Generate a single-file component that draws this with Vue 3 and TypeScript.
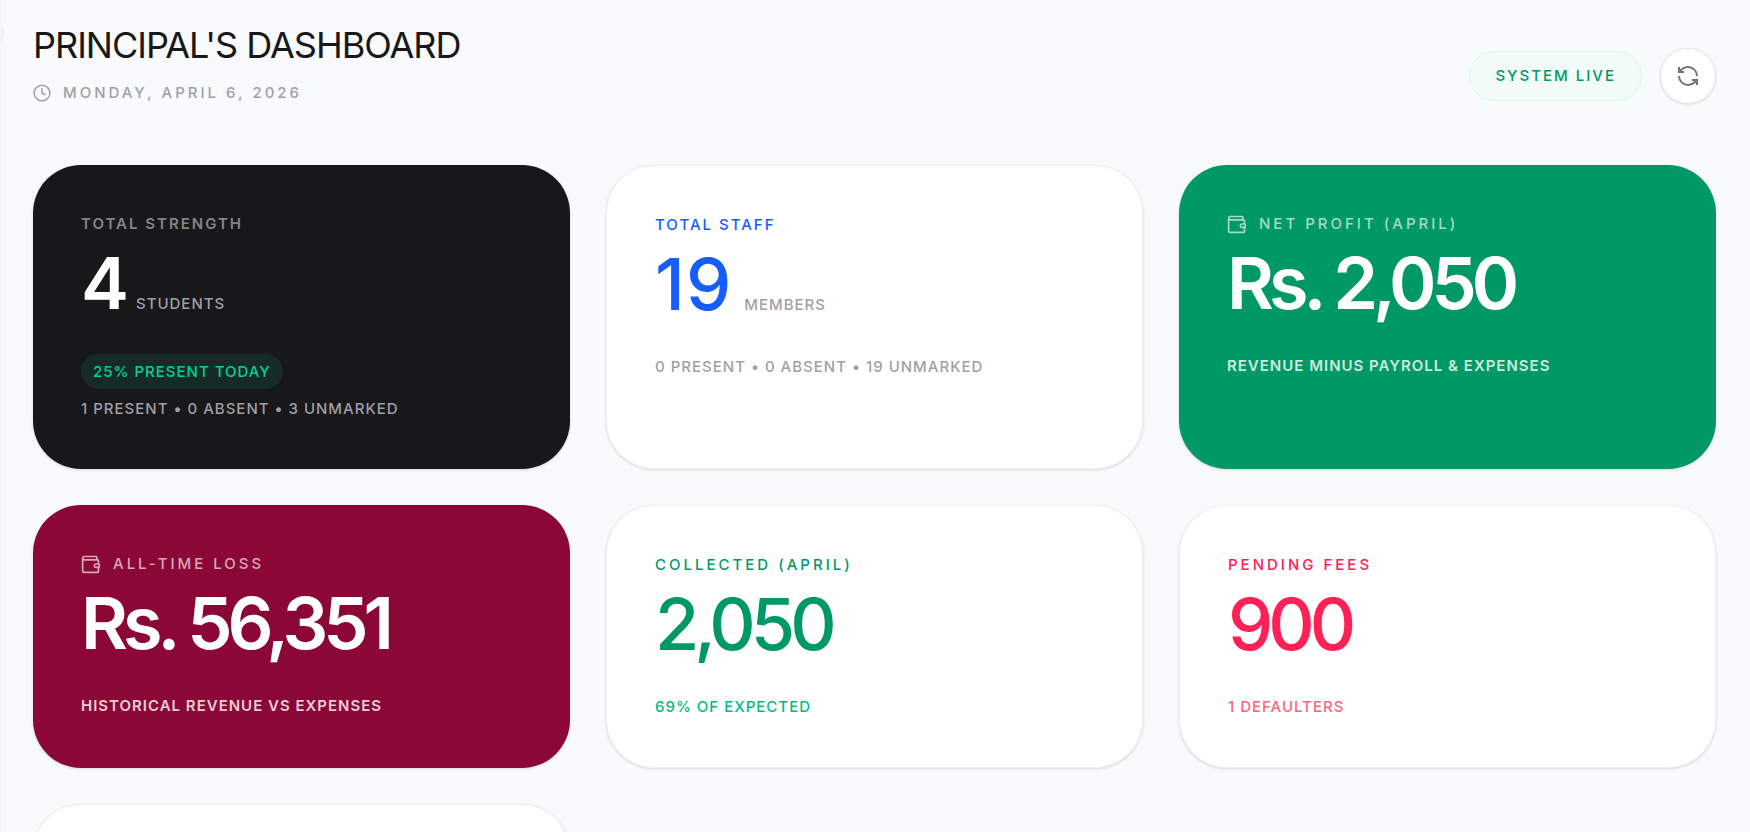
<script setup lang="ts">
interface StatCard {
  tone: string
  label: string
  value: string
  unit?: string
  badge?: string
  note: string
  wallet?: boolean
}

const cards: StatCard[] = [
  { tone: 'dark', label: 'Total Strength', value: '4', unit: 'Students', badge: '25% Present Today', note: '1 Present • 0 Absent • 3 Unmarked' },
  { tone: 'blue', label: 'Total Staff', value: '19', unit: 'Members', note: '0 Present • 0 Absent • 19 Unmarked' },
  { tone: 'green', label: 'Net Profit (April)', value: 'Rs. 2,050', note: 'Revenue minus payroll & expenses', wallet: true },
  { tone: 'wine', label: 'All-Time Loss', value: 'Rs. 56,351', note: 'Historical revenue vs expenses', wallet: true },
  { tone: 'mint', label: 'Collected (April)', value: '2,050', note: '69% of expected' },
  { tone: 'rose', label: 'Pending Fees', value: '900', note: '1 Defaulters' },
]
</script>

<template>
  <div class="page">
    <button class="rail-toggle" type="button" aria-label="Toggle sidebar"></button>
    <main class="content">
      <header class="header">
        <div>
          <h1 class="title">Principal's Dashboard</h1>
          <p class="date">
            <svg class="icon" viewBox="0 0 24 24" aria-hidden="true">
              <circle cx="12" cy="12" r="10.5" />
              <path d="M12 6v6l4 2" />
            </svg>
            <span>Monday, April 6, 2026</span>
          </p>
        </div>
        <div class="actions">
          <span class="live">System Live</span>
          <button class="refresh" type="button" aria-label="Refresh">
            <svg class="refresh-icon" viewBox="0 0 24 24" aria-hidden="true">
              <path d="M21 12a9 9 0 0 0-9-9 9.75 9.75 0 0 0-6.74 2.74L3 8" />
              <path d="M3 3v5h5" />
              <path d="M3 12a9 9 0 0 0 9 9 9.75 9.75 0 0 0 6.74-2.74L21 16" />
              <path d="M16 16h5v5" />
            </svg>
          </button>
        </div>
      </header>

      <section class="grid">
        <article v-for="card in cards" :key="card.label" class="card" :class="card.tone">
          <h2 class="label">
            <svg v-if="card.wallet" class="icon wallet" viewBox="0 0 24 24" aria-hidden="true">
              <path d="M19 7V4a1 1 0 0 0-1-1H4a2 2 0 0 0 0 4h16a1 1 0 0 1 1 1v4h-3a2 2 0 0 0 0 4h3a1 1 0 0 0 1-1v-2a1 1 0 0 0-1-1" />
              <path d="M2 5v15a2 2 0 0 0 2 2h16a1 1 0 0 0 1-1v-5" />
            </svg>
            <span>{{ card.label }}</span>
          </h2>
          <p class="figure">
            <span class="value">{{ card.value }}</span>
            <span v-if="card.unit" class="unit">{{ card.unit }}</span>
          </p>
          <div class="notes">
            <span v-if="card.badge" class="badge">{{ card.badge }}</span>
            <p class="note">{{ card.note }}</p>
          </div>
        </article>
        <article class="card blank"></article>
      </section>
    </main>
  </div>
</template>

<style>
body {
  margin: 0;
  background: #f9fafc;
}
</style>

<style scoped>
.page {
  position: relative;
  box-sizing: border-box;
  height: 100vh;
  overflow: hidden;
  border-left: 1px solid #f4f5f7;
  background: #f9fafc;
  color: #18181b;
  font-family: Inter, "Liberation Sans", sans-serif;
  text-transform: uppercase;
}
.rail-toggle {
  position: absolute;
  top: 20px;
  left: -25px;
  width: 27px;
  height: 27px;
  padding: 0;
  border: 1px solid #e2e8f0;
  border-radius: 50%;
  background: #fff;
  box-shadow: 0 1px 3px rgba(0, 0, 0, 0.1);
}
.content {
  padding: 23px 34px 36px 32px;
}
.header {
  display: flex;
  align-items: flex-end;
  justify-content: space-between;
  margin-bottom: 61px;
}
.title {
  margin: 0 0 15px;
  font-size: 36px;
  font-weight: 400;
  line-height: 44px;
  letter-spacing: -1px;
}
.date {
  display: flex;
  align-items: center;
  gap: 12px;
  margin: 0;
  color: #9f9fa9;
  font-size: 15px;
  font-weight: 500;
  line-height: 22px;
  letter-spacing: 3px;
}
.icon {
  flex: none;
  width: 18px;
  height: 18px;
  fill: none;
  stroke: currentColor;
  stroke-width: 2;
  stroke-linecap: round;
  stroke-linejoin: round;
}
.wallet {
  width: 20px;
  height: 20px;
}
.actions {
  display: flex;
  align-items: center;
  gap: 18px;
}
.live {
  padding: 13px 25px;
  border: 1px solid #d0fae5;
  border-radius: 25px;
  background: #f2fbf8;
  color: #009966;
  font-size: 15px;
  font-weight: 500;
  line-height: 22px;
  letter-spacing: 2px;
}
.refresh {
  display: flex;
  align-items: center;
  justify-content: center;
  width: 56px;
  height: 56px;
  padding: 0;
  border: 1px solid #e4e4e7;
  border-radius: 50%;
  background: #fff;
  color: #71717b;
  box-shadow: 0 1px 3px rgba(0, 0, 0, 0.1);
}
.refresh-icon {
  width: 24px;
  height: 24px;
  fill: none;
  stroke: currentColor;
  stroke-width: 2;
}
.grid {
  display: grid;
  grid-template-columns: repeat(3, 1fr);
  gap: 36px;
}
.card {
  padding: 48px;
  border-radius: 48px;
  box-shadow: 0 1px 3px rgba(0, 0, 0, 0.14);
}
.label {
  display: flex;
  align-items: center;
  gap: 12px;
  margin: 0 0 12px;
  font-size: 15px;
  font-weight: 500;
  line-height: 22px;
  letter-spacing: 3px;
}
.figure {
  display: flex;
  align-items: baseline;
  gap: 12px;
  height: 72px;
  margin: 0 0 35px;
}
.value {
  font-size: 72px;
  font-weight: 500;
  line-height: 72px;
  letter-spacing: -5px;
  text-transform: none;
}
.unit,
.note,
.badge {
  font-size: 15px;
  font-weight: 500;
  line-height: 24px;
  letter-spacing: 1px;
}
.notes {
  display: flex;
  flex-direction: column;
  align-items: flex-start;
  gap: 8px;
}
.note {
  margin: 0;
}
.badge {
  padding: 6px 12px 5px;
  border-radius: 18px;
  background: #162a27;
  color: #00d492;
}
.dark {
  background: #18181b;
  color: #fff;
}
.dark .label {
  color: #848486;
  font-weight: 600;
}
.dark .label,
.blue .label {
  letter-spacing: 2px;
}
.dark .value,
.green .value,
.wine .value {
  font-weight: 600;
}
.dark .unit,
.dark .note,
.blue .unit,
.blue .note {
  color: #9f9fa9;
}
.blue,
.mint,
.rose,
.blank {
  border: 1px solid #f1f1f3;
  background: #fff;
}
.blue {
  color: #155dfc;
}
.blue .value {
  letter-spacing: 1px;
}
.green {
  background: #009966;
  color: #fff;
}
.green .label {
  color: #a6dbc8;
}
.green .note {
  color: #cbeade;
  font-weight: 600;
}
.wine {
  background: #8b0836;
  color: #fff;
}
.wine .label {
  color: #d6a8b8;
}
.wine .note {
  color: #e8ccd5;
  font-weight: 600;
}
.mint {
  color: #009966;
}
.mint .note {
  color: #00bc7d;
}
.rose {
  color: #ff2056;
}
.rose .note {
  color: #ff637e;
}
.blank {
  min-height: 165px;
}
</style>
